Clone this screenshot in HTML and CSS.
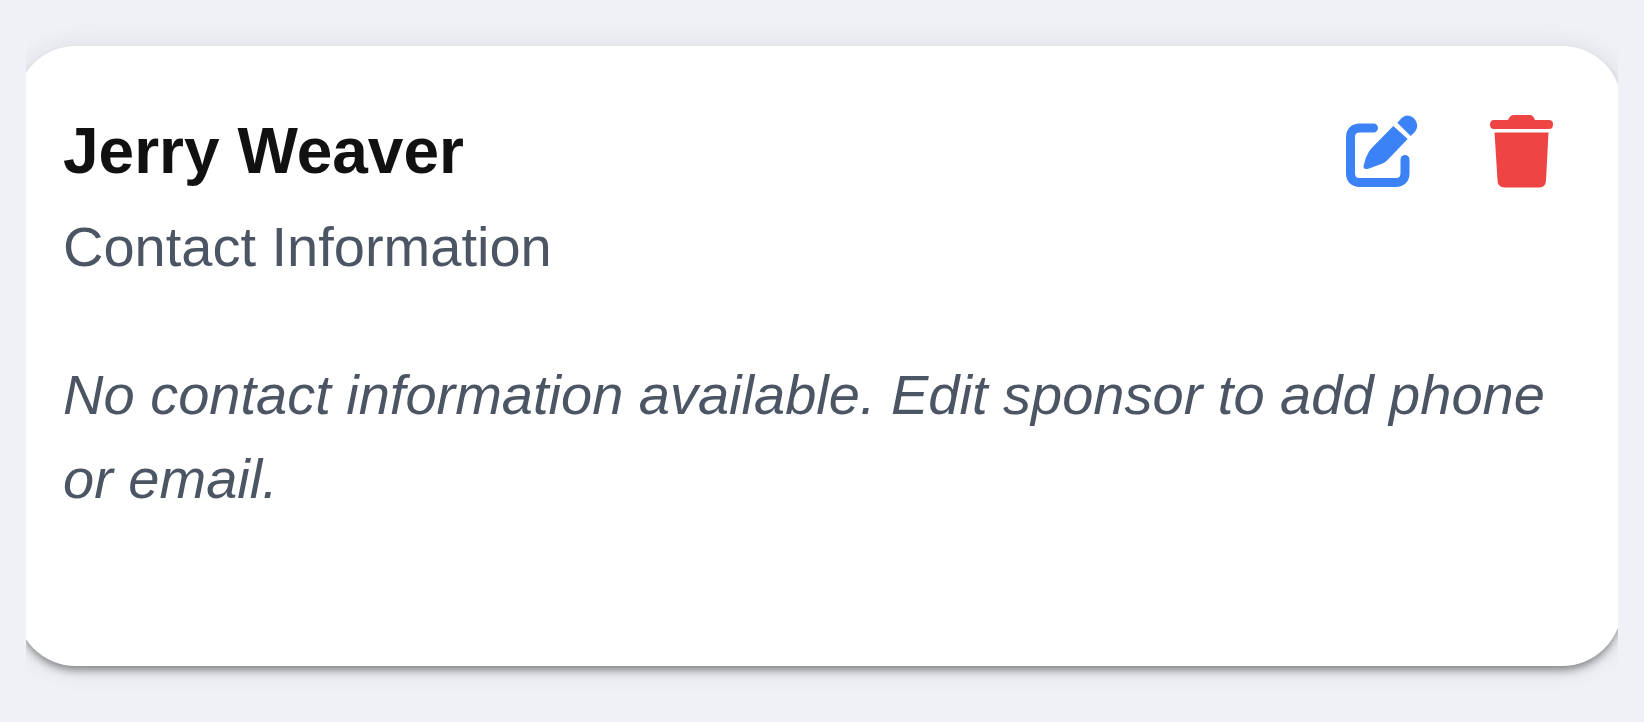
FILE: index.html
```html
<!DOCTYPE html>
<html lang="en">
<head>
<meta charset="utf-8">
<meta name="viewport" content="width=device-width, initial-scale=1">
<title>Sponsor</title>
<link rel="stylesheet" href="styles.css">
</head>
<body>
<main class="list">
  <article class="card">
    <header class="card-header">
      <h2 class="name">Jerry Weaver</h2>
      <div class="actions">
        <button class="action edit" type="button" aria-label="Edit sponsor">
          <svg class="icon" viewBox="0 0 72 72" aria-hidden="true">
            <path class="frame" d="M28.500 13H15Q5.500 13 5.500 22.500V58Q5.500 67.500 15 67.500H50.500Q60 67.500 60 58V44.500"/>
            <path d="M48.300 11L62.700 24L42 45.500Q40 47.600 37.500 48.600L24 53.500Q18 55.500 18.700 50.500Q20 43 24 36.500Q25 35 26.500 33.300Z"/>
            <path d="M52.300 7.700L57 2.800Q62 -1.500 67.500 2.200Q72 5.500 72.300 11Q72 14.500 69.800 17L65.700 21Z"/>
          </svg>
        </button>
        <button class="action delete" type="button" aria-label="Delete sponsor">
          <svg class="icon" viewBox="0 0 72 72" aria-hidden="true">
            <path d="M9 5H23Q25 0 29 0H45Q48 0 50 5H64Q68 5 68 9.500T64 14H9Q5 14 5 9.500T9 5Z"/>
            <path d="M9.500 17.500H63.500L61 65.500Q60.500 72.500 54 72.500H19.500Q13 72.500 12.500 65.500Z"/>
          </svg>
        </button>
      </div>
    </header>
    <p class="subtitle">Contact Information</p>
    <p class="empty">No contact information available. Edit sponsor to add phone or email.</p>
  </article>
</main>
</body>
</html>
```
FILE: styles.css
```css
* { box-sizing: border-box; }
body {
  margin: 0;
  background: #eff1f6;
  font-family: "Liberation Sans", Arial, sans-serif;
  color: #111;
}
.list {
  margin: 0 26px;
  padding: 46px 0 56px;
  overflow: hidden;
}
.card {
  margin: 0 -4px 0 -10px;
  padding: 57px 65px 145px 47px;
  background: #fff;
  border-radius: 60px;
  box-shadow: 0 6px 8px -2px rgba(0, 0, 0, 0.42), 0 2px 28px rgba(0, 0, 0, 0.1);
}
.card-header {
  display: flex;
  align-items: center;
  justify-content: space-between;
}
.name { margin: 0; font-size: 64px; line-height: 96px; }
.actions { display: flex; gap: 68px; }
.action { padding: 0; border: 0; background: none; display: flex; cursor: pointer; }
.icon { width: 72px; height: 72px; overflow: visible; fill: currentColor; }
.frame { fill: none; stroke: currentColor; stroke-width: 9; stroke-linecap: round; }
.edit { color: #3b82f6; }
.delete { color: #ef4444; }
.subtitle, .empty {
  margin: 0;
  font-size: 56px;
  line-height: 84px;
  color: #4b5563;
}
.subtitle { margin-top: 6px; }
.empty { margin-top: 64px; font-style: italic; }
```
